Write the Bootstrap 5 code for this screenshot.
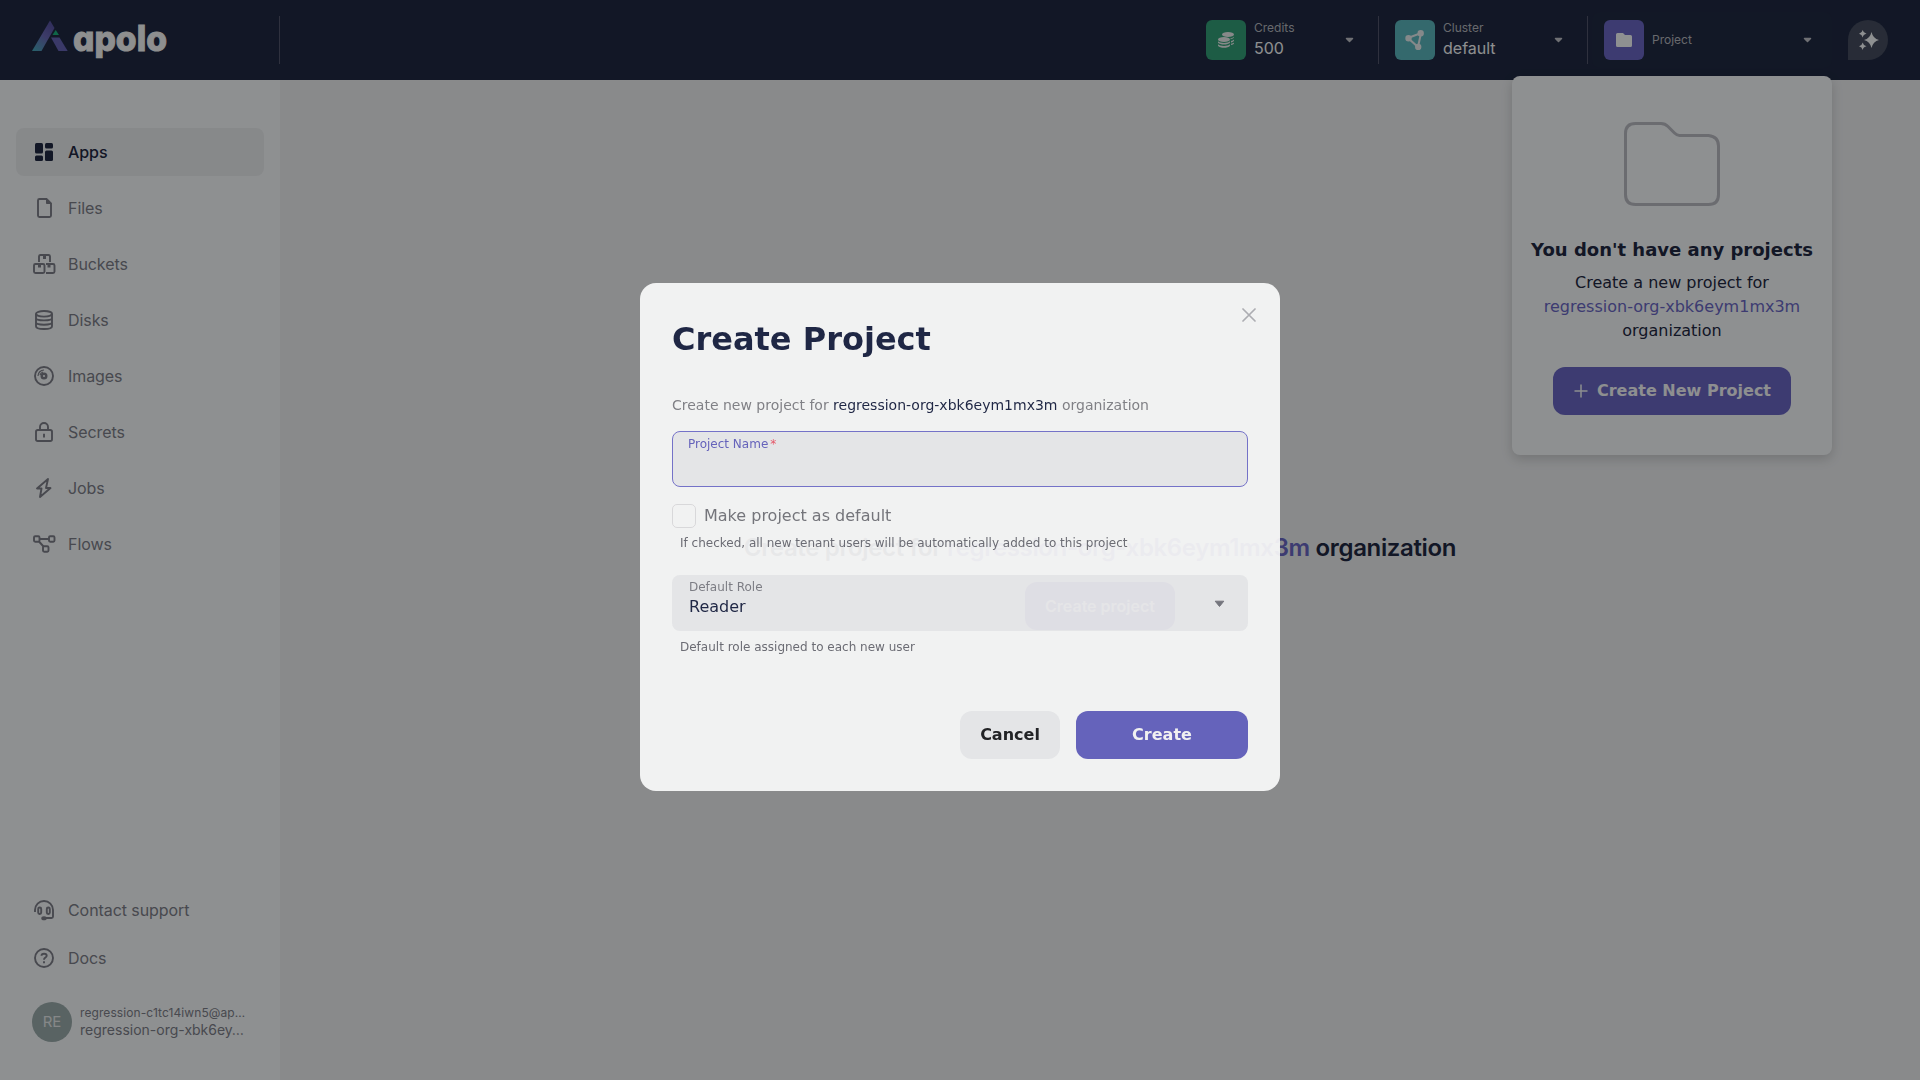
<!DOCTYPE html>
<html lang="en">
<head>
<meta charset="utf-8">
<meta name="viewport" content="width=device-width, initial-scale=1">
<title>Apolo Console</title>
<link href="https://cdn.jsdelivr.net/npm/bootstrap@5.3.0/dist/css/bootstrap.min.css" rel="stylesheet">
<style>
:root { --ink:#1f2942; --grey:#7c7e88; --brand:#6967c3; }
body { font-family: Inter, sans-serif; height:1080px; overflow:hidden; background:#eceef0; color:var(--ink); }
svg { display:block; flex:none; }
.topbar { height:80px; background:#1f2942; padding-right:32px; }
.brand { width:280px; height:48px; padding-left:32px; border-right:1px solid #52556b; }
.brand text { font:800 35px Inter, sans-serif; font-feature-settings:"cv11"; }
.picker { height:56px; padding:0 18px 0 12px; border-radius:8px; }
.w180 { width:180px; } .w200 { width:200px; } .w240 { width:240px; background:#202a43; }
.vline { width:1px; height:48px; background:#52556b; margin:0 4px; }
.tile { width:40px; height:40px; border-radius:6px; margin-right:8px; flex:none; }
.cap { font-size:12px; line-height:18px; color:#b4b6bc; }
.duo { padding-bottom:2px; }
.val { font-size:16px; line-height:22px; color:#f4f6f8; }
.assist { width:40px; height:40px; background:#454c5f; border-radius:50% 50% 50% 0; margin-left:16px; }
.side { width:280px; height:1000px; background:#f5f8fa; padding:48px 16px 38px; }
.side a { height:48px; padding-left:16px; gap:12px; border-radius:8px; font-size:16px; letter-spacing:-.07px; color:var(--grey); text-decoration:none; }
.side a.on { background:#e9ecee; color:var(--ink); font-weight:500; }
.menu { gap:8px; }
.avatar { width:40px; height:40px; border-radius:50%; background:#9aabab; color:#e5e9ea; font-size:15px; }
.who { color:var(--grey); }
.who .mail { font-size:12px; line-height:14px; letter-spacing:.09px; }
.who .org { font-size:14px; line-height:19px; }
.stage { font-size:24px; font-weight:600; line-height:36px; letter-spacing:-.35px; gap:16px; }
.stage .go { height:48px; padding:0 20px; border-radius:12px; background:var(--brand); color:#f4f6f8; font-size:16px; font-weight:600; letter-spacing:0; }
.tint { color:var(--brand); }
.dv { font-family:"DejaVu Sans", sans-serif; }
.drop { position:absolute; left:1512px; top:76px; width:320px; height:379px; background:#f5f8fa; border-radius:8px; box-shadow:0 4px 12px rgba(0,0,0,.16); padding-top:46px; }
.drop h5 { font-size:18px; font-weight:700; line-height:28px; margin:30px 0 7px; white-space:nowrap; }
.drop p { font-size:16px; line-height:24px; margin:0 0 24px; }
.drop .go { width:238px; height:48px; border-radius:12px; background:var(--brand); color:#f4f6f8; font-size:16px; font-weight:700; gap:9px; padding-left:1px; white-space:nowrap; }
.shade { position:fixed; inset:0; background:rgba(0,0,0,.42); }
.dialog { position:fixed; left:640px; top:283px; width:640px; height:508px; border-radius:16px; background:rgba(250,250,250,.92); padding:32px; color:#1f2745; }
.dialog .x { position:absolute; right:24px; top:25px; }
.dialog h1 { font-size:32px; font-weight:700; line-height:48px; margin:0 0 32px; }
.intro { font-size:14px; line-height:21px; color:#808186; margin-bottom:15px; }
.intro b { font-weight:400; color:#1f2745; }
.field { height:56px; border-radius:8px; background:rgba(25,25,55,.06); }
.field.focus { border:1px solid #7472c8; padding:3px 15px; }
.field.pick { padding:3px 22px 0 17px; }
.field label { display:block; font-size:12px; line-height:18px; color:#7c7d84; }
.field.focus label { color:#6563bb; }
.field .role { font-size:16px; line-height:22px; }
.tick { width:24px; height:24px; border:1px solid #d8d8da; border-radius:5px; }
.chk { font-size:16px; line-height:24px; color:#74757b; gap:8px; margin-top:17px; }
.chk label { padding-bottom:1px; line-height:23px; }
.star { color:#e5596a; margin-left:2px; }
.hint { font-size:12px; line-height:18px; color:#6b6c74; padding-left:8px; }
.hint.a { margin:6px 0 23px; } .hint.b { margin-top:7px; }
.caret { margin:22px 1px 0 0; }
.acts { margin-top:55px; gap:16px; }
.acts span { height:48px; border-radius:12px; font-size:16px; font-weight:700; }
.no { width:100px; background:rgba(25,25,55,.06); color:#222326; } .yes { width:172px; background:#6563bb; color:#f1f1f1; }
.green { background:#329f77; } .teal { background:#5bb5bc; } .violet { background:#6967c3; }
</style>
<script src="https://cdn.jsdelivr.net/npm/bootstrap@5.3.0/dist/js/bootstrap.bundle.min.js"></script>
</head>
<body>
<header class="topbar d-flex align-items-center">
  <div class="brand d-flex align-items-center me-auto">
    <svg width="138" height="48" viewBox="0 0 138 48">
      <defs><linearGradient id="g" x1="0" y1="1" x2=".6" y2="0"><stop offset="0" stop-color="#45a9b8"/><stop offset=".6" stop-color="#6967b5"/><stop offset="1" stop-color="#5753a0"/></linearGradient></defs>
      <path d="M18 4.500 22.500 12 9.500 35H0z" fill="url(#g)"/>
      <path d="M19 21.500h8.500L35.700 35H26.500z" fill="#6462b4"/>
      <path d="M23.700 14 27 19H20.500z" fill="#1bb07c"/>
      <text x="41" y="35" textLength="94" lengthAdjust="spacingAndGlyphs" fill="#f5f6f7" stroke="#f5f6f7" stroke-width=".9">apolo</text>
    </svg>
  </div>
  <div class="picker w180 d-flex align-items-center">
    <div class="tile green d-flex align-items-center justify-content-center">
      <svg width="18" height="18" viewBox="0 0 18 18" fill="#e8ecec"><ellipse cx="11" cy="3.500" rx="6" ry="2.500"/><path d="M13.500 8.300c1.700-.3 3-1 3.500-2V5.800c-.6.900-2 1.400-3.700 1.700zM14 11.500c1.500-.3 2.600-.9 3-1.700V8.500c-.6.700-1.700 1.200-3 1.500zM14 14c1.500-.3 2.600-.8 3-1.500v-1c-.6.600-1.700.9-3 1.200z"/><ellipse cx="7" cy="8.500" rx="6" ry="2.400"/><path d="M1 10.300c2 2.200 10 2.200 12 0v1.500c-2 2.400-10 2.400-12 0zM1 13.300c2 2.200 10 2.200 12 0v1.400c-2 2.800-10 2.800-12 0z"/></svg>
    </div>
    <div class="duo me-auto"><div class="cap">Credits</div><div class="val">500</div></div>
    <svg width="13" height="8" viewBox="0 0 13 8"><path d="M3.500 2.500h6L6.500 5.500z" fill="#c0c2c8" stroke="#c0c2c8" stroke-width="1.500" stroke-linejoin="round"/></svg>
  </div>
  <div class="vline"></div>
  <div class="picker w200 d-flex align-items-center">
    <div class="tile teal d-flex align-items-center justify-content-center">
      <svg width="20" height="20" viewBox="0 0 20 20" fill="#e5ecee" stroke="#e5ecee" stroke-width="2"><path d="M3 8 16 3 13 17z" fill="none"/><circle cx="3.500" cy="8.200" r="2.200"/><circle cx="15.700" cy="3.200" r="2.200"/><circle cx="13.200" cy="17" r="2.200"/></svg>
    </div>
    <div class="duo me-auto"><div class="cap">Cluster</div><div class="val">default</div></div>
    <svg width="13" height="8" viewBox="0 0 13 8"><path d="M3.500 2.500h6L6.500 5.500z" fill="#c0c2c8" stroke="#c0c2c8" stroke-width="1.500" stroke-linejoin="round"/></svg>
  </div>
  <div class="vline"></div>
  <div class="picker w240 d-flex align-items-center">
    <div class="tile violet d-flex align-items-center justify-content-center">
      <svg width="16" height="14" viewBox="0 0 16 14"><path d="M1.500 0H7l2 2h5.500Q16 2 16 3.500v9q0 1.500-1.500 1.500h-13Q0 14 0 12.500v-11Q0 0 1.500 0" fill="#f5f8fa"/></svg>
    </div>
    <div class="cap me-auto">Project</div>
    <svg width="13" height="8" viewBox="0 0 13 8"><path d="M3.500 2.500h6L6.500 5.500z" fill="#c0c2c8" stroke="#c0c2c8" stroke-width="1.500" stroke-linejoin="round"/></svg>
  </div>
  <div class="assist d-flex align-items-center justify-content-center">
    <svg width="22" height="20" viewBox="-1 0 22 20" fill="#f5f8fa"><path d="M13.500 2Q15 8.500 21 10 15 11.500 13.500 18 12 11.500 6 10 12 8.500 13.500 2M4.700 0Q5.300 3 8.500 3.800 5.300 4.500 4.700 7.500 4 4.500 1 3.800 4 3 4.700 0M4.700 12.500Q5.300 15.500 8.500 16.300 5.300 17 4.700 20 4 17 1 16.300 4 15.500 4.700 12.500"/></svg>
  </div>
</header>

<div class="d-flex">
  <nav class="side d-flex flex-column">
    <div class="menu d-flex flex-column mb-auto">
      <a href="#" class="on d-flex align-items-center"><svg width="24" height="24" fill="#1f2942"><rect x="3" y="3" width="8" height="10.500" rx="1.500"/><rect x="13" y="3" width="8" height="5.500" rx="1.500"/><rect x="3" y="15.500" width="8" height="5.500" rx="1.500"/><rect x="13" y="10.500" width="8" height="10.500" rx="1.500"/></svg>Apps</a>
      <a href="#" class="d-flex align-items-center"><svg width="24" height="24" fill="none" stroke="#7c7e88" stroke-width="1.900"><path d="M14.500 3H7.500Q6 3 6 4.500v15Q6 21 7.500 21h10Q19 21 19 19.500V7.500z"/><path d="M14.500 3.500V7.500H18.500z" fill="#7c7e88" stroke-width="1"/></svg>Files</a>
      <a href="#" class="d-flex align-items-center"><svg width="24" height="24" fill="none" stroke="#7c7e88" stroke-width="1.900"><path d="M7 10V4.500Q7 3 8.500 3h8Q18 3 18 4.500V10"/><rect x="2" y="12" width="10.500" height="9" rx="1.500"/><path d="M14 21H21Q22.500 21 22.500 19.500V13.500Q22.500 12 21 12H14"/><path d="M11 3h3v4h-3zM6 12h3v3.500H6zM15.500 12h3v3.500h-3z" stroke="none" fill="#7c7e88"/></svg>Buckets</a>
      <a href="#" class="d-flex align-items-center"><svg width="24" height="24" fill="none" stroke="#7c7e88" stroke-width="1.900"><ellipse cx="12" cy="5.800" rx="8" ry="2.800"/><path d="M4 5.800V18.200C4 22 20 22 20 18.200V5.800M4 10C4 13.200 20 13.200 20 10M4 14.300C4 17.500 20 17.500 20 14.300"/></svg>Disks</a>
      <a href="#" class="d-flex align-items-center"><svg width="24" height="24" fill="none" stroke="#7c7e88" stroke-width="1.900"><circle cx="12" cy="12" r="9"/><circle cx="12" cy="12" r="2.300" stroke-width="2.400"/><path d="M6 12A6 6 0 0 1 12 6M8 11A4.500 4.500 0 0 1 11 8" stroke-width="1.200"/></svg>Images</a>
      <a href="#" class="d-flex align-items-center"><svg width="24" height="24" fill="none" stroke="#7c7e88" stroke-width="1.900"><rect x="4" y="10" width="16" height="11" rx="1.800"/><path d="M8 10V7a4 4 0 0 1 8 0v3M12 13.700v3.700"/></svg>Secrets</a>
      <a href="#" class="d-flex align-items-center"><svg width="24" height="24" fill="none" stroke="#7c7e88" stroke-width="1.900" stroke-linejoin="round"><path d="M16 3 5 12.500H9.500L8 21 18.500 12H14z"/></svg>Jobs</a>
      <a href="#" class="d-flex align-items-center"><svg width="24" height="24" fill="none" stroke="#7c7e88" stroke-width="1.900"><rect x="2" y="4.300" width="5.500" height="5.500" rx="1.200"/><rect x="17" y="4.300" width="5.500" height="5.500" rx="1.200"/><rect x="11" y="14.300" width="5.500" height="5.500" rx="1.200"/><path d="M7.500 7H17M7 9.500 11.500 14.500"/></svg>Flows</a>
    </div>
    <a href="#" class="d-flex align-items-center"><svg width="24" height="24" fill="none" stroke="#7c7e88" stroke-width="1.900"><path d="M3 14V12a9 9 0 0 1 18 0v6.500Q21 20 19.500 20H12"/><rect x="6.200" y="9.500" width="3" height="6.500" rx="1.400"/><rect x="14.800" y="9.500" width="3" height="6.500" rx="1.400"/><ellipse cx="12" cy="20.200" rx="1.800" ry="1.100" fill="#7c7e88"/></svg>Contact support</a>
    <a href="#" class="d-flex align-items-center"><svg width="24" height="24" fill="none" stroke="#7c7e88" stroke-width="1.900"><circle cx="12" cy="12" r="9"/><path d="M9.500 9.800C9.500 7 14.700 7 14.700 9.800 14.700 11.700 12 11.500 12 13.700M12 15.200v2"/></svg>Docs</a>
    <div class="d-flex align-items-center ps-3 mt-3 pt-1 gap-2">
      <div class="avatar d-flex align-items-center justify-content-center">RE</div>
      <div class="who"><div class="mail">regression-c1tc14iwn5@ap…</div><div class="org">regression-org-xbk6ey…</div></div>
    </div>
  </nav>
  <main class="stage flex-grow-1 d-flex flex-column align-items-center justify-content-center">
    <div>Create project for <span class="tint">regression-org-xbk6eym1mx3m</span> organization</div>
    <div class="go d-flex align-items-center">Create project</div>
  </main>
</div>

<div class="drop dv d-flex flex-column align-items-center text-center">
  <svg width="96" height="84" fill="none" stroke="#b8bac2" stroke-width="3"><path d="M11.500 1.500H37Q41 1.500 44 4.500L50.500 11Q53 13.500 55.500 13.500H84.500Q94.500 14.500 94.500 24V72.500Q94.500 82.500 84.500 82.500H11.500Q1.500 82.500 1.500 72.500V11.500Q1.500 1.500 11.500 1.500z"/></svg>
  <h5>You don't have any projects</h5>
  <p>Create a new project for<br><span class="tint">regression-org-xbk6eym1mx3m</span><br>organization</p>
  <div class="go d-flex align-items-center justify-content-center"><svg width="14" height="14" stroke="#f4f6f8" stroke-width="1.500"><path d="M7 .5v13M.5 7h13"/></svg>Create New Project</div>
</div>

<div class="shade"></div>

<section class="dialog dv">
  <svg class="x" width="14" height="14" stroke="#acadb2" stroke-width="1.700" stroke-linecap="round"><path d="M1 1 13 13M13 1 1 13"/></svg>
  <h1>Create Project</h1>
  <div class="intro">Create new project for <b>regression-org-xbk6eym1mx3m</b> organization</div>
  <div class="field focus"><label>Project Name<span class="star">*</span></label></div>
  <div class="chk d-flex align-items-center"><span class="tick"></span><label>Make project as default</label></div>
  <div class="hint a">If checked, all new tenant users will be automatically added to this project</div>
  <div class="field pick d-flex justify-content-between">
    <div><label>Default Role</label><div class="role">Reader</div></div>
    <svg class="caret" width="11" height="8"><path d="M1.200 1.200h8.600L5.500 6.500z" fill="#74757d" stroke="#74757d" stroke-linejoin="round"/></svg>
  </div>
  <div class="hint b">Default role assigned to each new user</div>
  <div class="acts d-flex justify-content-end">
    <span class="no d-flex align-items-center justify-content-center">Cancel</span>
    <span class="yes d-flex align-items-center justify-content-center">Create</span>
  </div>
</section>
</body>
</html>
